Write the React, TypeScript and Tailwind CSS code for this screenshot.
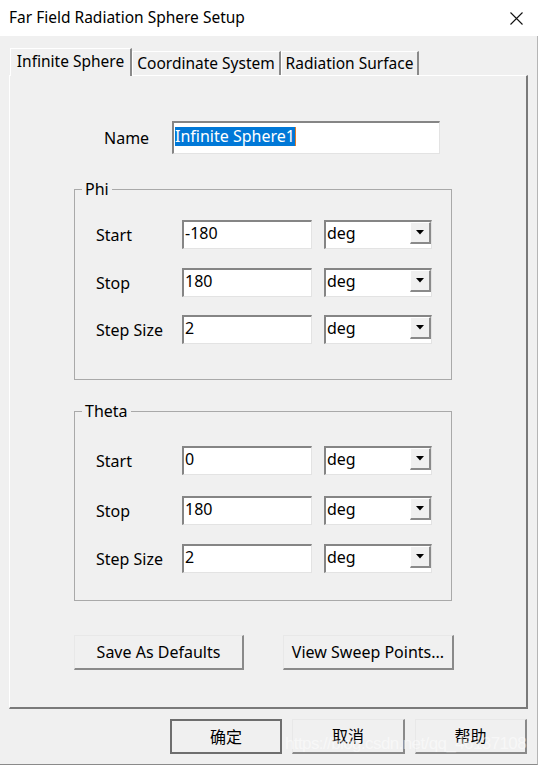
import React from "react";

const font = "font-['Noto_Sans','Noto_Sans_CJK_SC',sans-serif]";

const Field: React.FC<{ value: string }> = ({ value }) => (
    <div className="w-[130px] h-[29px] bg-white border-t-2 border-l-2 border-t-[#858585] border-l-[#858585] border-b border-r border-b-[#e3e3e3] border-r-[#e3e3e3] pl-[1px] text-[16px] leading-[22px] text-black">
        {value}
    </div>
);

const Combo: React.FC = () => (
    <div className="w-[108px] h-[29px] bg-white border-t-2 border-l-2 border-t-[#858585] border-l-[#858585] border-b border-r border-b-[#e3e3e3] border-r-[#e3e3e3] flex items-start">
        <span className="flex-1 pl-[1px] text-[16px] leading-[22px] text-black">deg</span>
        <div className="w-[21px] h-[22px] bg-[#f0f0f0] border-t border-l border-t-white border-l-white border-r-2 border-b-2 border-r-[#8a8a8a] border-b-[#8a8a8a] flex items-center justify-center">
            <svg width="8" height="5" viewBox="0 0 8 5">
                <path d="M0 0 H8 L4 4.5 Z" fill="#000" />
            </svg>
        </div>
    </div>
);

const Row: React.FC<{ label: string; value: string }> = ({ label, value }) => (
    <div className="flex items-center h-[29px]">
        <span className="w-[86px] pl-[21px] box-content text-[16px] text-black whitespace-nowrap">{label}</span>
        <Field value={value} />
        <div className="ml-[12px]">
            <Combo />
        </div>
    </div>
);

const Group: React.FC<{ title: string; rows: [string, string][]; pt: string; pb: string; gaps: string[] }> = ({ title, rows, pt, pb, gaps }) => (
    <fieldset className={`w-[378px] border border-[#a9a9a9] ${pt} ${pb}`}>
        <legend className="ml-[7px] px-[3px] text-[16px] leading-[20px] text-black">{title}</legend>
        {rows.map(([l, v], i) => (
            <div key={l} className={i > 0 ? gaps[i - 1] : ""}>
                <Row label={l} value={v} />
            </div>
        ))}
    </fieldset>
);

const Btn: React.FC<{ w: string; children: React.ReactNode; primary?: boolean }> = ({ w, children, primary }) => (
    <div
        className={
            primary
                ? `${w} h-[35px] border-2 border-[#6e6e6e] bg-[#f0f0f0] flex items-center justify-center text-[16px] text-black`
                : `${w} h-[35px] border-t border-l border-t-[#e8e8e8] border-l-[#e8e8e8] border-r-2 border-b-2 border-r-[#8a8a8a] border-b-[#8a8a8a] bg-[#f0f0f0] flex items-center justify-center text-[16px] text-black`
        }
    >
        {children}
    </div>
);

export default function App() {
    return (
        <div className={`w-[538px] h-[765px] bg-[#f0f0f0] relative overflow-hidden ${font}`}>
            <div className="h-[36px] bg-white flex items-center justify-between pl-[9px] pr-[15px]">
                <span className="text-[15.5px] text-black">Far Field Radiation Sphere Setup</span>
                <svg width="13" height="13" viewBox="0 0 13 13">
                    <path d="M0.5 0.5 L12.5 12.5 M12.5 0.5 L0.5 12.5" stroke="#111" strokeWidth="1.1" />
                </svg>
            </div>

            <div className="border-r border-b border-r-[#b5b5b5] border-b-[#8a8a8a] h-[729px]">
                <div className="flex items-end pl-[10px] pt-[12px] h-[39px]">
                    <div className="relative z-10 -mb-[1px] w-[122px] h-[28px] bg-[#f0f0f0] border-t border-l border-t-white border-l-white border-r-2 border-r-[#8a8a8a] flex items-start justify-center pt-[1px] text-[15.5px] text-black">
                        Infinite Sphere
                    </div>
                    <div className="w-[149px] h-[24px] border-t border-l border-t-white border-l-white border-r-2 border-r-[#8a8a8a] flex items-start justify-center text-[15.5px] leading-[22px] text-black">
                        Coordinate System
                    </div>
                    <div className="w-[138px] h-[24px] border-t border-l border-t-white border-l-white border-r-2 border-r-[#8a8a8a] flex items-start justify-center text-[15.5px] leading-[22px] text-black">
                        Radiation Surface
                    </div>
                </div>

                <div className="ml-[9px] w-[519px] h-[634px] border-t border-l border-t-white border-l-white border-r-2 border-b-2 border-r-[#7a7a7a] border-b-[#7a7a7a] pl-[64px] pt-[45px]">
                    <div className="flex items-center">
                        <span className="w-[98px] pl-[30px] box-border text-[16px] text-black">Name</span>
                        <div className="w-[268px] h-[33px] bg-white border-t-2 border-l-2 border-t-[#858585] border-l-[#858585] border-b border-r border-b-[#e3e3e3] border-r-[#e3e3e3] pl-[1px] pt-[1px]">
                            <span className="bg-[#0078d7] text-white text-[16px] leading-[19px] inline-block border-r border-r-[#e07b2a]">Infinite Sphere1</span>
                        </div>
                    </div>

                    <div className="mt-[25px]">
                        <Group
                            title="Phi"
                            rows={[["Start", "-180"], ["Stop", "180"], ["Step Size", "2"]]}
                            pt="pt-[21px]"
                            pb="pb-[35px]"
                            gaps={["mt-[19px]", "mt-[18px]"]}
                        />
                    </div>

                    <div className="mt-[21px]">
                        <Group
                            title="Theta"
                            rows={[["Start", "0"], ["Stop", "180"], ["Step Size", "2"]]}
                            pt="pt-[25px]"
                            pb="pb-[27px]"
                            gaps={["mt-[21px]", "mt-[19px]"]}
                        />
                    </div>

                    <div className="flex mt-[34px] gap-[39px]">
                        <Btn w="w-[170px]">Save As Defaults</Btn>
                        <Btn w="w-[171px]">View Sweep Points...</Btn>
                    </div>
                </div>

                <div className="flex justify-end gap-[10px] pr-[10px] mt-[10px]">
                    <Btn w="w-[112px]" primary>确定</Btn>
                    <Btn w="w-[113px]">取消</Btn>
                    <Btn w="w-[112px]">帮助</Btn>
                </div>
            </div>

            <span className="absolute left-[285px] top-[734px] text-[17px] leading-[20px] tracking-[-0.6px] text-white/50 pointer-events-none font-['Liberation_Sans',sans-serif]">
                https://blog.csdn.net/qq_46137108
            </span>
        </div>
    );
}
